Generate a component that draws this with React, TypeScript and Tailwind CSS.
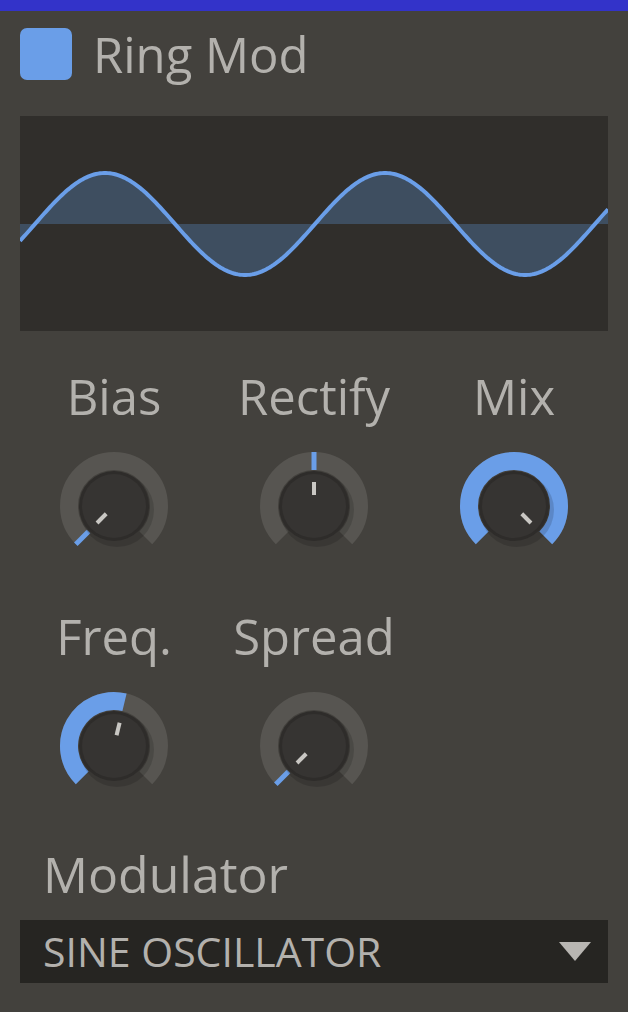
import React from 'react';

const BLUE = '#6a9ee8';

// angle in degrees, clockwise from top
const pt = (cx: number, cy: number, r: number, a: number) => {
  const rad = (a * Math.PI) / 180;
  return [cx + r * Math.sin(rad), cy - r * Math.cos(rad)];
};

const arc = (cx: number, cy: number, r: number, a0: number, a1: number) => {
  const [x0, y0] = pt(cx, cy, r, a0);
  const [x1, y1] = pt(cx, cy, r, a1);
  const large = a1 - a0 > 180 ? 1 : 0;
  return `M ${x0} ${y0} A ${r} ${r} 0 ${large} 1 ${x1} ${y1}`;
};

interface KnobProps {
  label: string;
  value: number; // 0..1
  bipolar?: boolean;
}

const Knob: React.FC<KnobProps> = ({ label, value, bipolar = false }) => {
  const c = 60;
  const start = -135;
  const end = 135;
  const angle = start + (end - start) * value;
  const from = bipolar ? 0 : start;
  const [l0x, l0y] = pt(c, c, 36, from);
  const [l1x, l1y] = pt(c, c, 54, from);
  const [i0x, i0y] = pt(c, c, 11, angle);
  const [i1x, i1y] = pt(c, c, 24, angle);
  const hasArc = Math.abs(angle - from) > 2;

  return (
    <div className="flex flex-col items-center">
      <div className="h-[56px] text-[49px] leading-[56px] whitespace-nowrap">{label}</div>
      <svg width="120" height="120" viewBox="0 0 120 120" className="mt-[22px]">
        <path d={arc(c, c, 45, start, end)} stroke="#575551" strokeWidth="18" fill="none" />
        {hasArc ? (
          <path d={arc(c, c, 45, from, angle)} stroke={BLUE} strokeWidth="18" fill="none" />
        ) : (
          <line x1={l0x} y1={l0y} x2={l1x} y2={l1y} stroke={BLUE} strokeWidth="5" />
        )}
        <circle cx={c + 3} cy={c + 4} r="37" fill="#000" opacity="0.14" />
        <circle cx={c} cy={c} r="35" fill="#2e2c2a" />
        <circle cx={c} cy={c} r="32" fill="#363432" />
        <line x1={i0x} y1={i0y} x2={i1x} y2={i1y} stroke="#c9c7c3" strokeWidth="4" />
      </svg>
    </div>
  );
};

const Wave: React.FC = () => {
  const w = 588;
  const mid = 108;
  const pts: string[] = [];
  for (let x = 0; x <= w; x += 2) {
    const y = mid - 51 * Math.sin((2 * Math.PI * (x - 15)) / 280);
    pts.push(`${x},${y.toFixed(2)}`);
  }
  const line = pts.join(' ');
  return (
    <svg width="588" height="215" viewBox="0 0 588 215" className="block">
      <polygon points={`${line} ${w},${mid} 0,${mid}`} fill="#3e4e60" />
      <polyline points={line} fill="none" stroke={BLUE} strokeWidth="4" />
    </svg>
  );
};

export default function App() {
  return (
    <div className="w-[628px] h-[1012px] bg-[#43413d] text-[#b3b1ad] font-['Open_Sans',sans-serif] overflow-hidden">
      <div className="h-[11px] bg-[#3333c9]" />

      <div className="mt-[17px] px-[20px] h-[52px] flex items-center gap-[21px]">
        <div className="w-[52px] h-[52px] rounded-[7px] bg-[#6a9ee8]" />
        <span className="text-[49px] leading-[52px]">Ring Mod</span>
      </div>

      <div className="mt-[36px] mx-[20px] h-[215px] bg-[#302e2b]">
        <Wave />
      </div>

      <div className="mt-[37px] ml-[14px] w-[600px] grid grid-cols-3 gap-y-[42px]">
        <Knob label="Bias" value={0} />
        <Knob label="Rectify" value={0.5} bipolar />
        <Knob label="Mix" value={1} />
        <Knob label="Freq." value={0.55} />
        <Knob label="Spread" value={0} />
      </div>

      <div className="mt-[42px] pl-[43px] h-[52px] text-[50px] leading-[52px]">Modulator</div>

      <div className="mt-[20px] mx-[20px] h-[63px] bg-[#262522] flex items-center justify-between pl-[23px] pr-[17px]">
        <span className="text-[41px] leading-[63px] whitespace-nowrap">SINE OSCILLATOR</span>
        <svg width="32" height="19" viewBox="0 0 32 19">
          <polygon points="0,0 32,0 16,19" fill="#b8b6b2" />
        </svg>
      </div>
    </div>
  );
}
